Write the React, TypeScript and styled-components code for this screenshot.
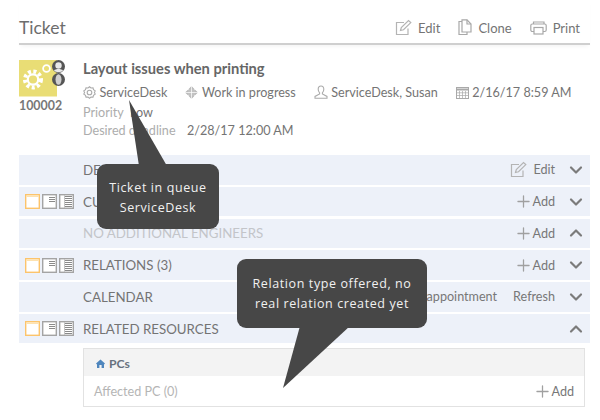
import React from 'react';
import styled, { createGlobalStyle } from 'styled-components';
import { ChevronDown, ChevronUp, Plus } from 'lucide-react';

// --- GLOBAL STYLES ---
const GlobalStyle = createGlobalStyle`
  * { margin: 0; padding: 0; box-sizing: border-box; }
  html, body { width: 600px; height: 420px; overflow: hidden; background: #fff; }
  body { font-family: 'Lato', 'Open Sans', sans-serif; font-size: 12.6px; color: #6f6f6f; }
`;

// --- STYLED COMPONENTS ---
const Page = styled.div`
  position: relative; width: 600px; height: 420px; padding: 0 10px 0 19px;
`;

const TitleBar = styled.header`
  height: 45px; display: flex; align-items: center; justify-content: space-between;
  padding: 12px 10px 0 0; border-bottom: 2px solid #cfcfcf;
  box-shadow: 0 3px 4px -2px rgba(0,0,0,0.06);
`;

const PageTitle = styled.h1`
  font-size: 17.5px; font-weight: 400; color: #6d6d6d;
`;

const ToolGroup = styled.div`
  display: flex; gap: 18px; font-size: 13px;
`;

const Tool = styled.span`
  display: flex; align-items: center; gap: 6px; color: #747474;
`;

const TicketHead = styled.section`
  display: flex; height: 110px; padding-top: 15px;
`;

const Badge = styled.div`
  width: 64px; display: flex; flex-direction: column; gap: 1px;
`;

const TicketNumber = styled.span`
  font-weight: 700; font-size: 12.4px; color: #777;
`;

const TicketInfo = styled.div`
  flex: 1; display: flex; flex-direction: column;
`;

const TicketName = styled.h2`
  font-size: 14.7px; font-weight: 700; color: #666; line-height: 16px;
`;

const MetaRow = styled.div`
  display: flex; gap: 18px; margin-top: 7px; height: 18px; align-items: center;
`;

const MetaItem = styled.span`
  display: flex; align-items: center; gap: 3.5px; white-space: nowrap; color: #747474;
`;

const DetailRow = styled.div<{ $top: number }>`
  display: flex; margin-top: ${p => p.$top}px; line-height: 18px; white-space: nowrap;
`;

const DetailLabel = styled.span<{ $width: number }>`
  width: ${p => p.$width}px; color: #adadad;
`;

const DetailValue = styled.span`
  color: #747474;
`;

const Sections = styled.div`
  display: flex; flex-direction: column; gap: 2.25px; width: 571px;
`;

const SectionRow = styled.div`
  height: 29.5px; background: #edf1f9; display: flex; align-items: center; padding-right: 4px;
`;

const ViewSlot = styled.div`
  width: 64px; padding-left: 6px; display: flex; gap: 2px; align-items: center;
`;

const SectionLabel = styled.span<{ $muted?: boolean }>`
  flex: 1; font-size: 13.3px; white-space: nowrap; color: ${p => (p.$muted ? '#c3c5c9' : '#747474')};
`;

const RowAction = styled.span`
  display: flex; align-items: center; color: #777; white-space: nowrap; margin-right: 11px;
`;

const RowLink = styled(RowAction)`
  margin-right: 16px;
`;

const Chevron = styled.span`
  width: 20px; display: flex; justify-content: center; color: #7b7b7b;
`;

const ResourcePanel = styled.div`
  width: 502px; height: 59px; margin: 5px 0 0 64px; border: 1px solid #e2e2e2; background: #fff;
`;

const ResourceHead = styled.div`
  height: 27px; background: #f3f3f3; display: flex; align-items: center; gap: 4px; padding: 1px 0 0 12px;
  font-weight: 700; font-size: 12.2px; color: #68727e;
`;

const ResourceBody = styled.div`
  height: 30px; display: flex; align-items: center; justify-content: space-between; padding: 0 10px;
  color: #b5b5b5;
`;

const AddLink = styled.span`
  display: flex; align-items: center; color: #777;
`;

const Callout = styled.div<{ $x: number; $y: number; $w: number; $h: number; $nudge: number }>`
  position: absolute; left: ${p => p.$x}px; top: ${p => p.$y}px; width: ${p => p.$w}px; height: ${p => p.$h}px;
  padding-top: ${p => p.$nudge}px;
  background: #474747; border-radius: 9px; color: #f1f1f1; font-family: 'Open Sans', sans-serif;
  font-size: 12.5px; line-height: 20px; letter-spacing: 0.6px; text-align: center;
  display: flex; align-items: center; justify-content: center; z-index: 5;
`;

const Pointer = styled.svg`
  position: absolute; left: 0; top: 0; z-index: 5; pointer-events: none;
`;

// --- ICONS ---
const EditIcon = () => (
  <svg width="17" height="17" viewBox="0 0 17 17" fill="none" stroke="#b4b4b4" strokeWidth="1.2">
    <path d="M13 9.5V15.5H1.5V3.5H9" />
    <path d="M5.5 11.5L6.3 8.5L13.5 1.5L15.8 3.6L8.5 10.8Z" />
  </svg>
);

const CloneIcon = () => (
  <svg width="14" height="17" viewBox="0 0 14 17" fill="none" stroke="#a8a8a8" strokeWidth="1.2">
    <path d="M4 2.5H1V15.5H9V13" />
    <path d="M4 .8H9L13 5V13H4Z" />
    <path d="M9 .8V5H13" />
  </svg>
);

const PrintIcon = () => (
  <svg width="17" height="14" viewBox="0 0 17 14" fill="none" stroke="#a8a8a8" strokeWidth="1.2">
    <path d="M3.5 3V1H14V3" />
    <rect x=".8" y="3" width="15.4" height="7.5" rx="1.5" />
    <rect x="4" y="6.5" width="9" height="6.5" fill="#fff" />
  </svg>
);

const GearIcon = () => (
  <svg width="13" height="13" viewBox="0 0 13 13" fill="none" stroke="#ababab" strokeWidth="1.1">
    <path d="M6.5 .8L8 2L10 1.9L10.5 3.7L12.2 4.9L11.4 6.5L12.2 8.1L10.5 9.3L10 11.1L8 11L6.5 12.2L5 11L3 11.1L2.5 9.3L.8 8.1L1.6 6.5L.8 4.9L2.5 3.7L3 1.9L5 2Z" />
    <circle cx="6.5" cy="6.5" r="2.3" />
  </svg>
);

const StatusIcon = () => (
  <svg width="13" height="13" viewBox="0 0 13 13">
    <path d="M6.5 0L9.3 3H3.7ZM6.5 13L3.7 10H9.3ZM0 6.5L3 3.7V9.3ZM13 6.5L10 9.3V3.7Z" fill="#b5b5b5" />
    <circle cx="6.5" cy="6.5" r="4.2" fill="#c2c2c2" />
    <path d="M6.5 0V13M0 6.5H13" stroke="#fff" strokeWidth=".7" />
  </svg>
);

const UserIcon = () => (
  <svg width="14" height="14" viewBox="0 0 14 14" fill="none" stroke="#ababab" strokeWidth="1.1">
    <path d="M7 1C5.2 1 4.2 2.4 4.2 4.2C4.2 6 5 7.2 5.6 7.8V9L1 11.4V13.2H13V11.4L8.4 9V7.8C9 7.2 9.8 6 9.8 4.2C9.8 2.4 8.8 1 7 1Z" />
  </svg>
);

const CalendarIcon = () => (
  <svg width="13" height="13" viewBox="0 0 13 13" fill="none" stroke="#a9a9a9" strokeWidth="1">
    <rect x=".5" y="1.5" width="12" height="11" />
    <path d="M.5 3.5H12.5" strokeWidth="2" />
    <path d="M3.5 5V12.5M6.5 5V12.5M9.5 5V12.5M.5 6.8H12.5M.5 9.5H12.5" strokeWidth=".7" />
  </svg>
);

const HomeIcon = () => (
  <svg width="9" height="9" viewBox="0 0 9 9">
    <path d="M4.5 .5L9 4.6L8 5.4V9H5.6V6H3.4V9H1V5.4L0 4.6Z" fill="#4f86bd" />
  </svg>
);

const TicketLogo = () => (
  <svg width="47" height="37" viewBox="0 0 47 37">
    <rect x="0" y="0" width="38" height="36.5" fill="#e9dd75" />
    <g fill="none" stroke="#fff">
      <circle cx="14" cy="19.5" r="8" strokeWidth="4" strokeDasharray="3 2.4" />
      <circle cx="14" cy="19.5" r="5.2" strokeWidth="2.2" />
      <circle cx="27.5" cy="8.5" r="3.4" strokeWidth="1.8" />
    </g>
    <circle cx="39.5" cy="6.5" r="6.5" fill="#555" />
    <circle cx="39.5" cy="5.5" r="3.2" fill="#e8e8e8" />
    <path d="M35 10.5C36.5 8.5 42.5 8.5 44 10.5C42.5 12.8 36.5 12.8 35 10.5Z" fill="#e8e8e8" />
    <circle cx="39.5" cy="19.5" r="6.5" fill="#555" />
    <ellipse cx="39.5" cy="19.5" rx="3" ry="5.2" fill="#cfcfcf" />
  </svg>
);

const ViewBlank = () => (
  <svg width="15" height="15" viewBox="0 0 15 15">
    <rect x=".7" y=".7" width="13.6" height="13.6" fill="#fff" stroke="#fcc46b" strokeWidth="1.4" />
    <rect x="1.4" y="1.4" width="12.2" height="1.6" fill="#fde2b0" />
  </svg>
);

const ViewHalf = () => (
  <svg width="15" height="15" viewBox="0 0 15 15">
    <rect x=".7" y=".7" width="13.6" height="13.6" fill="#fff" stroke="#a4a4a4" strokeWidth="1.4" />
    <path d="M7 3.5H13M7 5.5H13M7 7.5H13" stroke="#8a8a8a" />
  </svg>
);

const ViewFull = () => (
  <svg width="15" height="15" viewBox="0 0 15 15">
    <rect x=".7" y=".7" width="13.6" height="13.6" fill="#fff" stroke="#a4a4a4" strokeWidth="1.4" />
    <path d="M5.5 1V14" stroke="#c4c4c4" />
    <path d="M6 2.5H13M6 4.5H13M6 6.5H13M6 8.5H13M6 10.5H13M6 12.5H13" stroke="#8a8a8a" />
  </svg>
);

const ViewSwitch = () => (
  <ViewSlot>
    <ViewBlank />
    <ViewHalf />
    <ViewFull />
  </ViewSlot>
);

const Add = () => (
  <RowAction>
    <Plus size={19} color="#a0a0a0" strokeWidth={1.6} />
    Add
  </RowAction>
);

const Toggle = ({ open }: { open?: boolean }) => (
  <Chevron>{open ? <ChevronUp size={20} strokeWidth={2.6} /> : <ChevronDown size={20} strokeWidth={2.6} />}</Chevron>
);

// --- APP COMPONENT ---
export default function App() {
  return (
    <>
      <GlobalStyle />
      <Page>
        <TitleBar>
          <PageTitle>Ticket</PageTitle>
          <ToolGroup>
            <Tool><EditIcon />Edit</Tool>
            <Tool><CloneIcon />Clone</Tool>
            <Tool><PrintIcon />Print</Tool>
          </ToolGroup>
        </TitleBar>

        <TicketHead>
          <Badge>
            <TicketLogo />
            <TicketNumber>100002</TicketNumber>
          </Badge>
          <TicketInfo>
            <TicketName>Layout issues when printing</TicketName>
            <MetaRow>
              <MetaItem><GearIcon />ServiceDesk</MetaItem>
              <MetaItem><StatusIcon />Work in progress</MetaItem>
              <MetaItem><UserIcon />ServiceDesk, Susan</MetaItem>
              <MetaItem><CalendarIcon />2/16/17 8:59 AM</MetaItem>
            </MetaRow>
            <DetailRow $top={3}>
              <DetailLabel $width={47}>Priority</DetailLabel>
              <DetailValue>Low</DetailValue>
            </DetailRow>
            <DetailRow $top={0}>
              <DetailLabel $width={104}>Desired deadline</DetailLabel>
              <DetailValue>2/28/17 12:00 AM</DetailValue>
            </DetailRow>
          </TicketInfo>
        </TicketHead>

        <Sections>
          <SectionRow>
            <ViewSlot />
            <SectionLabel>DESCRIPTION</SectionLabel>
            <RowAction><EditIcon />&nbsp;&nbsp;Edit</RowAction>
            <Toggle />
          </SectionRow>
          <SectionRow>
            <ViewSwitch />
            <SectionLabel>CUSTOMERS</SectionLabel>
            <Add />
            <Toggle />
          </SectionRow>
          <SectionRow>
            <ViewSlot />
            <SectionLabel $muted>NO ADDITIONAL ENGINEERS</SectionLabel>
            <Add />
            <Toggle open />
          </SectionRow>
          <SectionRow>
            <ViewSwitch />
            <SectionLabel>RELATIONS (3)</SectionLabel>
            <Add />
            <Toggle />
          </SectionRow>
          <SectionRow>
            <ViewSlot />
            <SectionLabel>CALENDAR</SectionLabel>
            <RowLink>New appointment</RowLink>
            <RowAction>Refresh</RowAction>
            <Toggle />
          </SectionRow>
          <SectionRow>
            <ViewSwitch />
            <SectionLabel>RELATED RESOURCES</SectionLabel>
            <Toggle open />
          </SectionRow>
        </Sections>

        <ResourcePanel>
          <ResourceHead><HomeIcon />PCs</ResourceHead>
          <ResourceBody>
            Affected PC (0)
            <AddLink><Plus size={19} color="#a0a0a0" strokeWidth={1.6} />Add</AddLink>
          </ResourceBody>
        </ResourcePanel>

        <Pointer width="600" height="420">
          <path d="M129 100L167 166H139Z" fill="#474747" />
          <path d="M300 326L350 326L283 388Z" fill="#474747" />
        </Pointer>
        <Callout $x={97} $y={164} $w={122} $h={65} $nudge={3}>
          <div>Ticket in queue<br />ServiceDesk</div>
        </Callout>
        <Callout $x={237} $y={259} $w={190} $h={69} $nudge={1}>
          <div>Relation type offered, no<br />real relation created yet</div>
        </Callout>
      </Page>
    </>
  );
}
